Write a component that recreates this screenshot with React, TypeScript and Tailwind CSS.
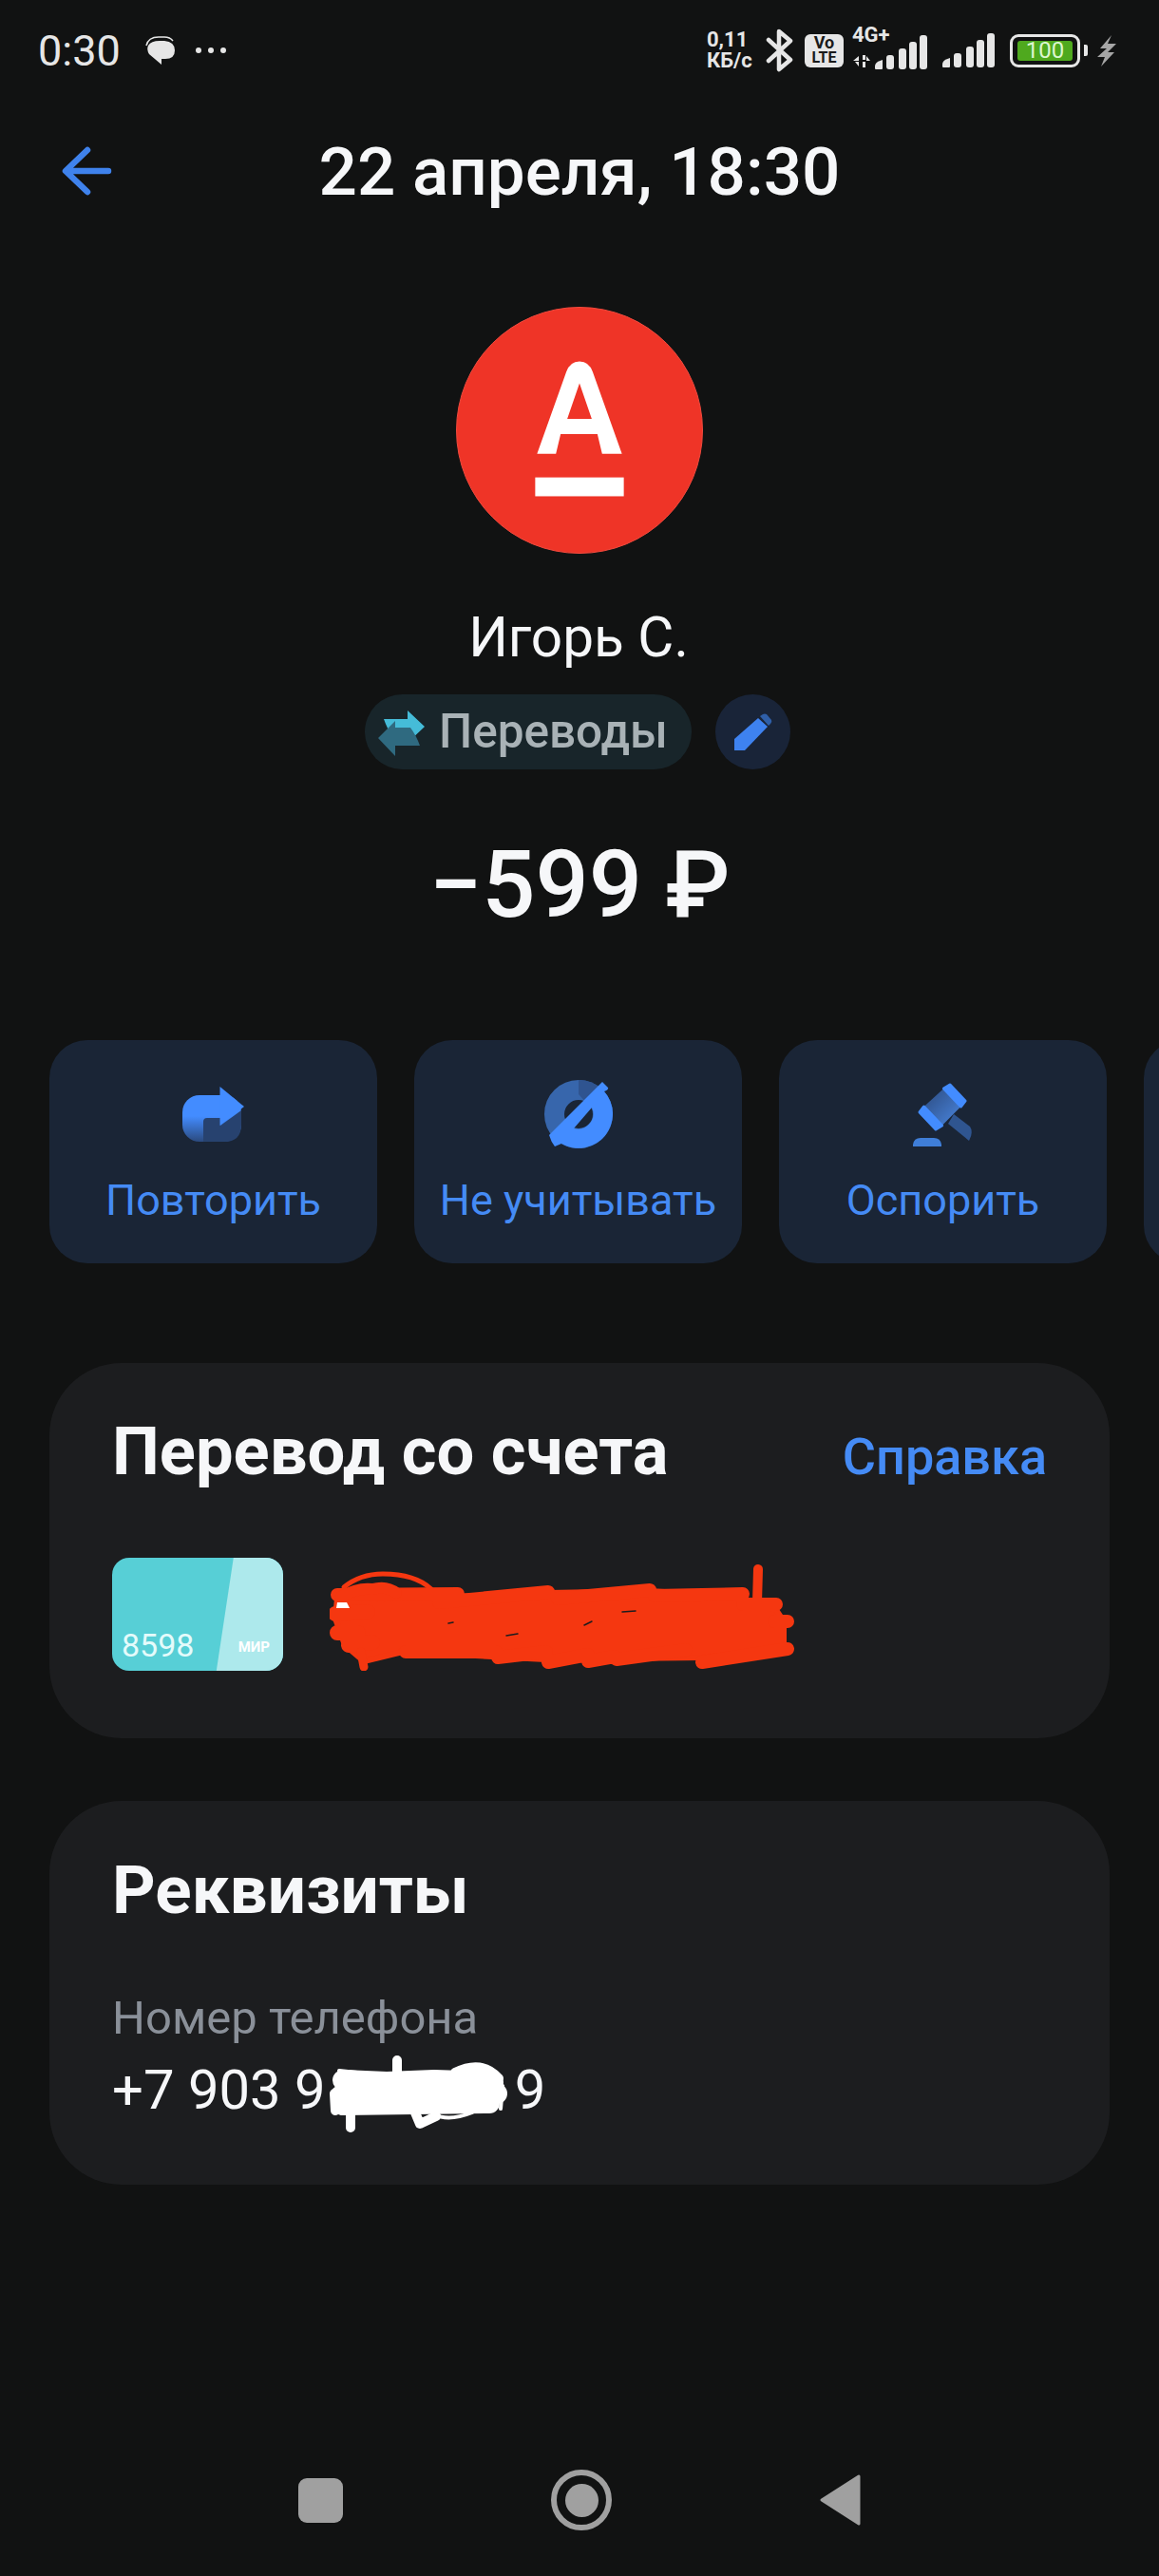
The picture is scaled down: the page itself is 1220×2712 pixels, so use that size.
import React from "react";

function Signal() {
  return (
    <svg width="56" height="36" viewBox="0 0 56 36" fill="#e6e6e6">
      <path d="M0 33 Q0 29 4 27.500 L8 26 V35 Q8 36 7 36 H1 Q0 36 0 35 Z" />
      <rect x="12" y="21" width="8" height="15" rx="3" />
      <rect x="25" y="14" width="8" height="22" rx="3" />
      <rect x="36" y="7" width="8" height="29" rx="3" />
      <rect x="47" y="0" width="8" height="36" rx="3" />
    </svg>
  );
}

function ActionButton({ icon, label }: { icon?: React.ReactNode; label?: string }) {
  return (
    <div className="flex h-[235px] w-[345px] shrink-0 flex-col items-center rounded-[40px] bg-[#1a2536] pt-[42px]">
      <div className="flex h-[72px] items-center justify-center">{icon}</div>
      <div className="mt-[25px] flex h-[60px] items-center text-[45px] text-[#458bf5]">{label}</div>
    </div>
  );
}

export default function App() {
  return (
    <div className="h-[2712px] w-[1220px] overflow-hidden bg-[#111212] font-['Roboto',sans-serif] text-[#f6f7f9]">
      {/* Status bar */}
      <div className="flex h-[106px] items-center justify-between pl-[40px] pr-[45px] text-[#e6e6e6]">
        <div className="flex items-center">
          <span className="text-[45px] leading-none">0:30</span>
          <svg className="ml-[26px]" width="32" height="31" viewBox="0 0 32 31" fill="#e6e6e6">
            <path d="M4 19 Q1 14 3 10 Q6 5 15 5 H20 Q31 6 31 15 Q31 24 21 24 H17 V30 Z" />
            <path d="M1 10 Q3 1 14 1 H20 Q26 1 29 5" fill="none" stroke="#e6e6e6" strokeWidth="1.500" />
          </svg>
          <div className="ml-[21px] flex gap-[7px]">
            <span className="h-[6px] w-[6px] rounded-full bg-[#e6e6e6]" />
            <span className="h-[6px] w-[6px] rounded-full bg-[#e6e6e6]" />
            <span className="h-[6px] w-[6px] rounded-full bg-[#e6e6e6]" />
          </div>
        </div>
        <div className="flex items-center">
          <div className="flex w-[50px] flex-col text-[22px] font-bold leading-[22px]">
            <span>0,11</span>
            <span>КБ/с</span>
          </div>
          <svg className="ml-[12px]" width="29" height="46" viewBox="0 0 29 46" fill="none" stroke="#e6e6e6" strokeWidth="4.500" strokeLinejoin="round" strokeLinecap="round">
            <path d="M3 12 L26 33 L14 43 V3 L26 13 L3 34" />
          </svg>
          <div className="ml-[12px] flex h-[35px] w-[41px] flex-col items-center justify-center rounded-[6px] bg-[#e6e6e6] text-[#1a1a1a]">
            <span className="text-[18px] font-bold leading-[16px]">Vo</span>
            <span className="text-[16px] font-bold leading-[16px]">LTE</span>
          </div>
          <div className="relative ml-[9px] flex h-[40px] w-[81px] items-end">
            <span className="absolute left-0 top-[-6px] text-[22px] font-bold leading-[20px]">4G+</span>
            <svg className="mb-[2px] ml-[1px]" width="18" height="14" viewBox="0 0 18 14" fill="#e6e6e6">
              <path d="M0 7 L6 2 V7 Z M6 8 V13 L2 8 Z M10 1 H13 V6 H10 Z M14 2 L18 7 H14 Z M10 8 H13 V14 H10 Z" />
            </svg>
            <div className="absolute bottom-0 right-[1px]">
              <Signal />
            </div>
          </div>
          <div className="ml-[14px] flex">
            <Signal />
          </div>
          <div className="ml-[15px] flex h-[35px] w-[74px] items-center justify-center rounded-[9px] border-[3px] border-[#e6e6e6]">
            <div className="flex h-[21px] w-[58px] items-center justify-center rounded-[3px] bg-[#4fa91e] text-[24px] leading-none text-[#dcf7cf]">100</div>
          </div>
          <div className="ml-[4px] h-[12px] w-[4px] rounded-r-[2px] bg-[#e6e6e6]" />
          <svg className="ml-[10px]" width="20" height="33" viewBox="0 0 20 33" fill="#a6a6a6">
            <path d="M15 0 L3 14 H10 L0 23 H8 L4 33 L18 18 H11 L20 9 H11 Z" />
          </svg>
        </div>
      </div>

      {/* Header */}
      <div className="grid h-[148px] grid-cols-[1fr_auto_1fr] items-center">
        <svg className="ml-[64px]" width="56" height="54" viewBox="0 0 56 54" fill="none" stroke="#3f82ec" strokeWidth="6.500" strokeLinecap="round" strokeLinejoin="round">
          <path d="M50 27 H6 M28 5 L5 27 L28 49" />
        </svg>
        <div className="text-[71px] font-medium leading-none">22 апреля, 18:30</div>
        <div />
      </div>

      {/* Avatar */}
      <div className="mt-[69px] flex justify-center">
        <div className="h-[260px] w-[260px] rounded-full border border-[#f04a3e] bg-[#ef3427]">
          <svg width="258" height="258" viewBox="0 0 260 260" fill="#fff">
            <path fillRule="evenodd" d="M85 155 L116 68 Q120 57 130 57 Q140 57 144 68 L175 155 H154 L149 134 H110 L105 155 Z M117 118 H143 L130 80 Z" />
            <rect x="83" y="180" width="94" height="20" />
          </svg>
        </div>
      </div>

      {/* Name */}
      <div className="mt-[52px] flex h-[72px] items-center justify-center pr-[2px] text-[58.500px] leading-none">Игорь С.</div>

      {/* Category */}
      <div className="mt-[24px] flex justify-center">
        <div className="ml-[-4px] flex h-[79px] w-[344px] items-center rounded-full bg-[#18252a] pl-[14px]">
          <svg className="mt-[2px]" width="50" height="48" viewBox="0 0 50 48">
            <path d="M6 9 H31 V0 L49 17 L31 34 V26 H14 Q10 20 6 9 Z" fill="#45bcd8" />
            <path d="M0 29 L18 11 V18 H34 Q40 26 44 37 H18 V48 Z" fill="#2f6a80" />
          </svg>
          <span className="ml-[14px] text-[49.500px] font-medium leading-none text-[#a9b2b6]">Переводы</span>
        </div>
        <div className="ml-[25px] flex h-[79px] w-[79px] items-center justify-center rounded-full bg-[#192438]">
          <svg width="40" height="39" viewBox="0 0 40 39">
            <path d="M0 27 L25 5 L35 14 L11 39 H0 Z" fill="#3e82f0" />
            <path d="M27 3 L30 1 Q32 0 34 1 L39 7 Q40 9 38 11 L36 13 Z" fill="#2f5fa8" />
          </svg>
        </div>
      </div>

      {/* Amount */}
      <div className="flex h-[242px] items-center justify-center text-[99px] font-medium leading-none">−599 ₽</div>

      {/* Actions */}
      <div className="mt-[43px] flex gap-[39px] overflow-hidden pl-[52px]">
        <ActionButton
          label="Повторить"
          icon={
            <svg width="65" height="58" viewBox="0 0 65 58">
              <defs>
                <linearGradient id="rep" x1="0" y1="0" x2="0" y2="1">
                  <stop offset="0.45" stopColor="#438cff" />
                  <stop offset="1" stopColor="#2b4a7e" />
                </linearGradient>
              </defs>
              <rect x="0" y="9" width="62" height="49" rx="18" fill="url(#rep)" />
              <path d="M22 58 V37 Q22 33 26 33 H40 V41 L62 25 V40 Q62 58 44 58 Z" fill="#27426f" />
              <path d="M39.500 0 L65 21 L39.500 41 Z" fill="#438cff" />
            </svg>
          }
        />
        <ActionButton
          label="Не учитывать"
          icon={
            <svg width="72" height="72" viewBox="0 0 72 72">
              <circle cx="36" cy="36" r="25.500" fill="none" stroke="#3766ac" strokeWidth="21" />
              <path d="M36 0 A36 36 0 0 1 60 9 L45 25 L36 15 Z" fill="#2f5490" />
              <path fillRule="evenodd" d="M61 2 L67 8 Q68 10 63 12 A36 36 0 0 1 18 67 L11 70 Q7 65 5 58 Z M50 29 A16 16 0 0 1 31 51 Z" fill="#438cff" />
            </svg>
          }
        />
        <ActionButton
          label="Оспорить"
          icon={
            <svg width="64" height="68" viewBox="0 0 64 68">
              <defs>
                <linearGradient id="gav" x1="0" y1="0" x2="1" y2="1">
                  <stop offset="0" stopColor="#2b4a7e" />
                  <stop offset="1" stopColor="#4a86e0" />
                </linearGradient>
              </defs>
              <path d="M43 34 L60 47 Q64 53 59 62 L37 44 Z" fill="#2f5590" />
              <polygon points="32.400,7 50.400,26 30.600,46 11.600,26" fill="url(#gav)" />
              <polygon points="39,3 55,20 50.400,26 32.400,7" fill="#438cff" stroke="#438cff" strokeWidth="3" strokeLinejoin="round" />
              <polygon points="7,32 24,50 30.600,46 11.600,26" fill="#438cff" stroke="#438cff" strokeWidth="3" strokeLinejoin="round" />
              <path d="M0 68 V66 Q1 59 8 59 H22 Q29 59 30 66 V68 Z" fill="#3f7ed8" />
            </svg>
          }
        />
        <ActionButton />
      </div>

      {/* Account card */}
      <div className="mx-[52px] mt-[105px] h-[395px] rounded-[76px] bg-[#1c1d1f] px-[66px] pt-[51px]">
        <div className="flex h-[84px] items-baseline justify-between">
          <span className="text-[70.500px] font-bold leading-[84px]">Перевод со счета</span>
          <span className="text-[54px] font-medium leading-[84px] text-[#458bf5]">Справка</span>
        </div>
        <div className="mt-[70px] flex items-start">
          <div className="relative h-[119px] w-[180px] overflow-hidden rounded-[18px] bg-[#57cfd6]">
            <div className="absolute inset-0 bg-[#ade9ec] [clip-path:polygon(71%_0,100%_0,100%_100%,61%_100%)]" />
            <div className="relative flex h-full items-end justify-between pb-[8px] pl-[10px] pr-[14px]">
              <span className="text-[34px] leading-[38px] text-[#e4fbfb]">8598</span>
              <span className="mb-[10px] text-[15px] font-bold leading-[14px] text-white">МИР</span>
            </div>
          </div>
          <svg className="ml-[49px] mt-[7px]" width="490" height="112" viewBox="0 0 490 112" fill="none" stroke="#f53710" strokeLinecap="round" strokeLinejoin="round">
            <path strokeWidth="6" fill="#f53710" d="M8 36 L130 34 L230 30 L337 28 L430 34 L470 48 L478 60 L478 88 L393 98 L227 100 L77 92 L36 102 L16 85 L6 57 Z" />
            <path strokeWidth="5" d="M15 24 Q32 10 56 10 Q90 10 107 26" />
            <path strokeWidth="10" d="M451 5 L450 40" />
            <path strokeWidth="14" d="M8 32 L135 31 M115 40 L230 29 M240 36 L337 27 M342 33 L435 31 M435 42 L470 42 M468 60 L482 60" />
            <path strokeWidth="16" d="M6 52 L40 50 M8 72 L30 72 M20 85 L45 82" />
            <path strokeWidth="14" d="M80 92 L175 92 M177 98 L228 92 M230 103 L272 95 M272 102 L300 97 M302 100 L375 90 M392 103 L482 89" />
            <path strokeWidth="9" d="M36 108 L33 92" />
            <path strokeWidth="12" d="M12 34 Q30 24 45 26 Q60 22 70 30" />
            <path strokeWidth="0" fill="#ffffff" d="M8 40 H18 L21 46 H7 Z" />
            <path strokeWidth="1.500" stroke="#1c1d1f" d="M125 62 L130 61 M186 75 L198 73 M268 64 L276 60 M308 50 L322 49" />
          </svg>
        </div>
      </div>

      {/* Details card */}
      <div className="mx-[52px] mt-[66px] h-[404px] rounded-[76px] bg-[#1c1d1f] px-[66px] pt-[51px]">
        <div className="flex h-[84px] items-center text-[71px] font-bold leading-none">Реквизиты</div>
        <div className="mt-[58px] flex h-[70px] items-center text-[49px] leading-none text-[#8a9099]">Номер телефона</div>
        <div className="mt-[6px] flex h-[70px] items-center text-[58px] leading-none">
          <span>+7 903 9</span>
          <svg className="ml-[4px] mt-[9px] shrink-0" width="190" height="82" viewBox="0 0 190 82" fill="none" stroke="#ffffff" strokeLinecap="round" strokeLinejoin="round">
            <path strokeWidth="22" d="M14 26 L60 28 L110 26 L172 28 M12 42 L176 40 M14 52 L168 50" />
            <path strokeWidth="10" d="M22 60 L22 76 M71 5 L71 20 M132 18 Q160 4 178 24 M90 60 L95 72 L112 64 M5 40 L6 58" />
            <path strokeWidth="4" d="M150 14 Q170 18 182 32 L180 56 M10 16 L48 20 M110 62 Q125 70 150 60" />
          </svg>
          <span className="ml-[5px]">9</span>
        </div>
      </div>

      {/* Navigation bar */}
      <div className="mt-[300px] flex h-[64px] items-center justify-center gap-[219px]">
        <div className="h-[47px] w-[47px] rounded-[9px] bg-[#a0a0a0]" />
        <div className="flex h-[64px] w-[64px] items-center justify-center rounded-full border-[6px] border-[#a0a0a0]">
          <div className="h-[35px] w-[35px] rounded-full bg-[#a0a0a0]" />
        </div>
        <svg width="43" height="54" viewBox="0 0 43 54" fill="#a0a0a0" stroke="#a0a0a0" strokeWidth="3" strokeLinejoin="round">
          <path d="M2 27 L41 2 V52 Z" />
        </svg>
      </div>
    </div>
  );
}
